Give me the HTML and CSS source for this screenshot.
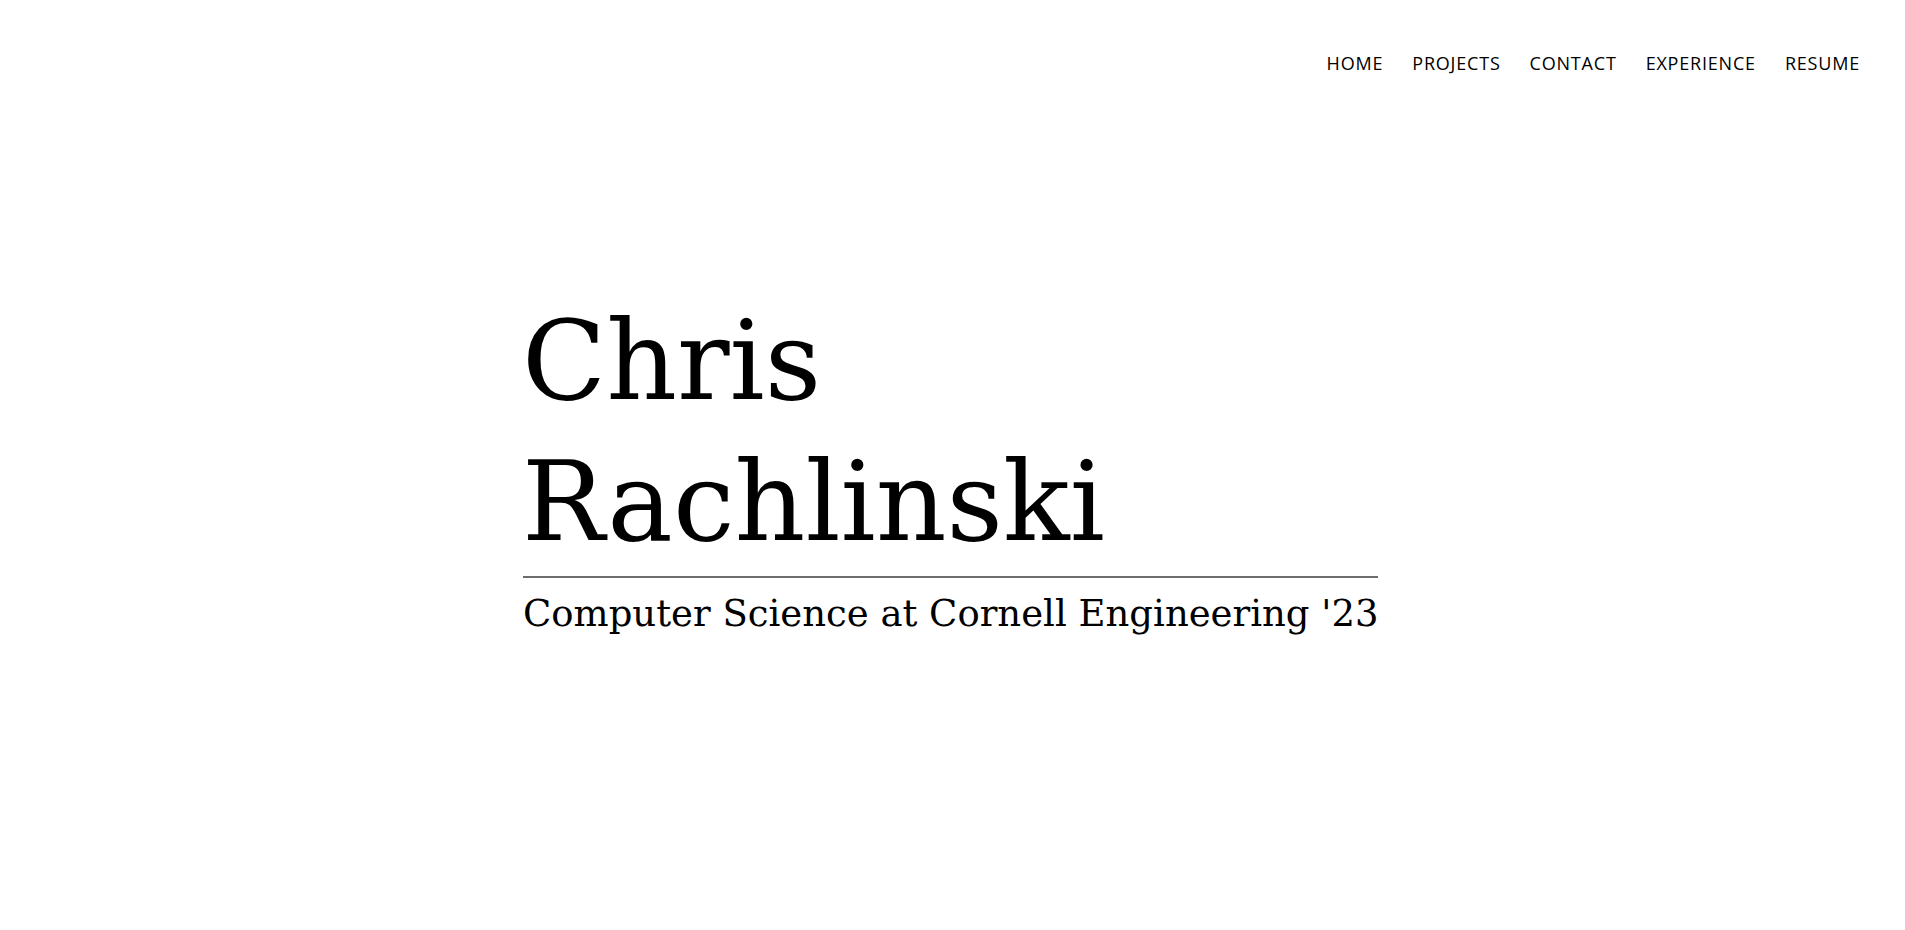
FILE: index.html
```html
<!DOCTYPE html>
<html lang="en">
<head>
<meta charset="utf-8">
<title>Chris Rachlinski</title>
<link rel="stylesheet" href="styles.css">
</head>
<body>
<header class="site-header">
  <nav class="nav">
    <a class="nav-link" href="#home">HOME</a>
    <a class="nav-link" href="#projects">PROJECTS</a>
    <a class="nav-link" href="#contact">CONTACT</a>
    <a class="nav-link" href="#experience">EXPERIENCE</a>
    <a class="nav-link" href="#resume">RESUME</a>
  </nav>
</header>
<main class="hero">
  <div class="hero-inner">
    <h1 class="name">Chris<br>Rachlinski</h1>
    <div class="rule"></div>
    <p class="tagline">Computer Science at Cornell Engineering '23</p>
  </div>
</main>
</body>
</html>
```
FILE: styles.css
```css
html, body {
  margin: 0;
  padding: 0;
  background: #ffffff;
  color: #000000;
}

.site-header {
  display: flex;
  justify-content: flex-end;
  padding: 51px 45px 0 0;
}

.nav {
  display: flex;
  gap: 29px;
}

.nav-link {
  font-family: "Open Sans", "Noto Sans", sans-serif;
  font-size: 18px;
  line-height: 24.5px;
  letter-spacing: 0.8px;
  color: #000000;
  text-decoration: none;
}

.hero {
  display: flex;
  justify-content: center;
  padding-top: 215px;
  padding-right: 4px;
}

.hero-inner {
  width: 855px;
  display: flex;
  flex-direction: column;
}

.name {
  margin: 0 0 0 -1px;
  font-family: "Roboto Slab", "DejaVu Serif", serif;
  font-weight: 300;
  font-size: 110px;
  line-height: 141px;
}

.rule {
  height: 2px;
  background: #6e6e6e;
  margin-top: 3px;
}

.tagline {
  margin: 14px 0 0 0;
  font-family: "Roboto Slab", "DejaVu Serif", serif;
  font-weight: 300;
  font-size: 37px;
  line-height: 44px;
  white-space: nowrap;
}
```
